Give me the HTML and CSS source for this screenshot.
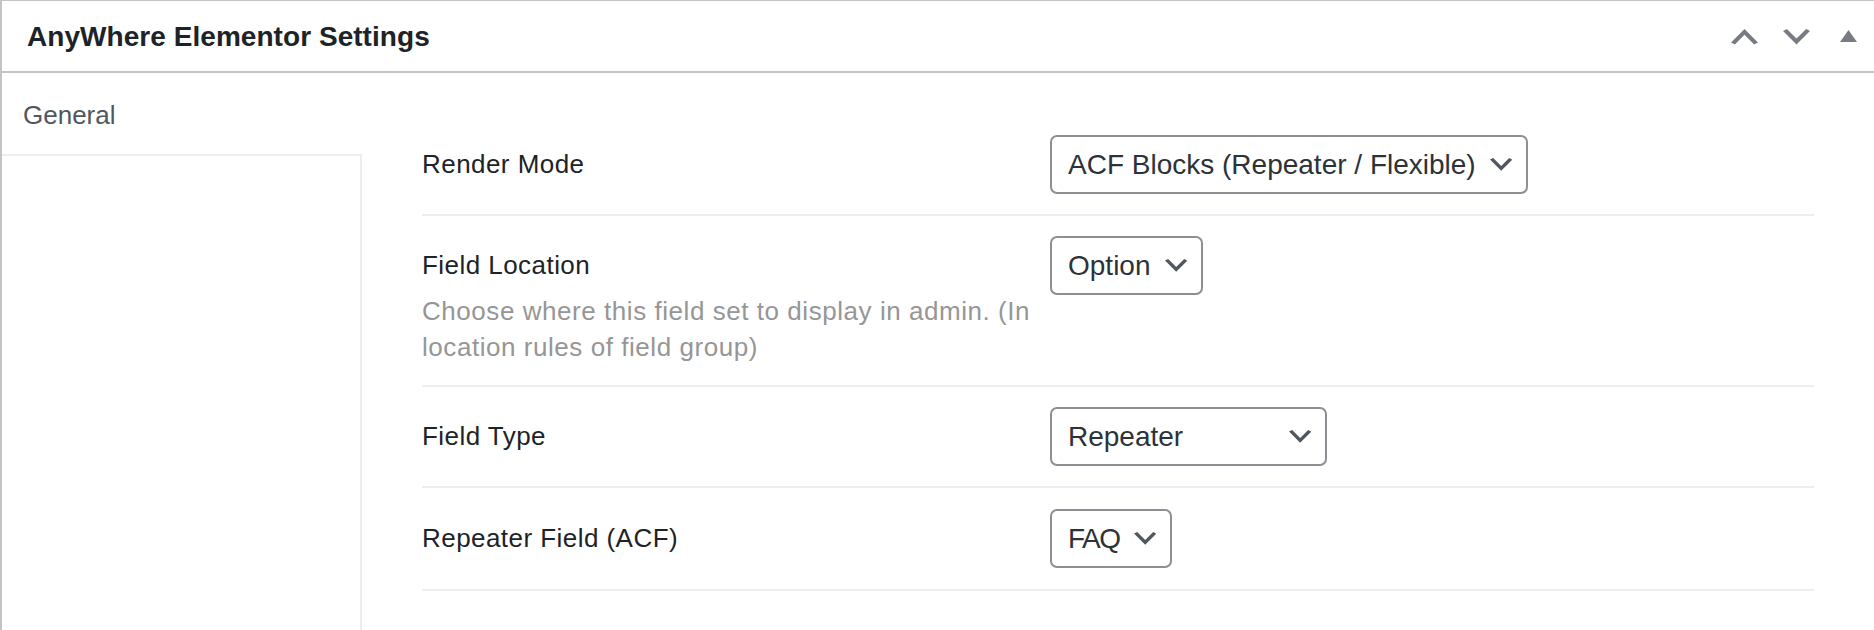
FILE: index.html
```html
<!DOCTYPE html>
<html lang="en">
<head>
<meta charset="utf-8">
<title>AnyWhere Elementor Settings</title>
<link rel="stylesheet" href="styles.css">
</head>
<body>
<div class="postbox">
  <div class="postbox-header">
    <h2 class="hndle">AnyWhere Elementor Settings</h2>
    <div class="handle-actions">
      <button class="handle-btn" type="button" aria-label="Move up">
        <svg class="handle-icon" width="27" height="15.4" viewBox="3 6 14 8"><path d="M15 14l-5-5-5 5-2-1 7-7 7 7z"/></svg>
      </button>
      <button class="handle-btn" type="button" aria-label="Move down">
        <svg class="handle-icon" width="27" height="15.4" viewBox="3 6 14 8"><path d="M5 6l5 5 5-5 2 1-7 7-7-7z"/></svg>
      </button>
      <button class="handle-btn" type="button" aria-label="Toggle panel">
        <svg class="handle-icon handle-icon--toggle" width="17" height="12" viewBox="0 0 17 12"><path d="M8.5 0L17 12H0z"/></svg>
      </button>
    </div>
  </div>
  <div class="inside">
    <div class="tabs">
      <div class="tab tab--active">General</div>
      <div class="tab-rest"></div>
    </div>
    <div class="fields">
      <div class="field">
        <div class="field-labels">
          <div class="field-label">Render Mode</div>
        </div>
        <div class="field-input">
          <div class="select">
            <span class="select-value">ACF Blocks (Repeater / Flexible)</span>
            <svg class="select-arrow" width="22.4" height="12.8" viewBox="3 6 14 8"><path d="M5 6l5 5 5-5 2 1-7 7-7-7 2-1z"/></svg>
          </div>
        </div>
      </div>
      <div class="field">
        <div class="field-labels">
          <div class="field-label">Field Location</div>
          <p class="field-desc">Choose where this field set to display in admin. (In location rules of field group)</p>
        </div>
        <div class="field-input">
          <div class="select">
            <span class="select-value">Option</span>
            <svg class="select-arrow" width="22.4" height="12.8" viewBox="3 6 14 8"><path d="M5 6l5 5 5-5 2 1-7 7-7-7 2-1z"/></svg>
          </div>
        </div>
      </div>
      <div class="field">
        <div class="field-labels">
          <div class="field-label">Field Type</div>
        </div>
        <div class="field-input">
          <div class="select select--wide">
            <span class="select-value">Repeater</span>
            <svg class="select-arrow" width="22.4" height="12.8" viewBox="3 6 14 8"><path d="M5 6l5 5 5-5 2 1-7 7-7-7 2-1z"/></svg>
          </div>
        </div>
      </div>
      <div class="field">
        <div class="field-labels">
          <div class="field-label">Repeater Field (ACF)</div>
        </div>
        <div class="field-input">
          <div class="select">
            <span class="select-value select-value--tight">FAQ</span>
            <svg class="select-arrow" width="22.4" height="12.8" viewBox="3 6 14 8"><path d="M5 6l5 5 5-5 2 1-7 7-7-7 2-1z"/></svg>
          </div>
        </div>
      </div>
    </div>
  </div>
</div>
</body>
</html>
```

FILE: styles.css
```css
* {
  box-sizing: border-box;
}

html,
body {
  margin: 0;
  padding: 0;
  background: #ffffff;
}

body {
  font-family: "Liberation Sans", Arial, sans-serif;
  color: #1d2327;
}

.postbox {
  min-height: 100vh;
  display: flex;
  flex-direction: column;
  border-top: 1px solid #c3c4c7;
  border-left: 2px solid #c3c4c7;
  background: #ffffff;
}

.postbox-header {
  display: flex;
  align-items: center;
  justify-content: space-between;
  height: 72px;
  padding-left: 25px;
  padding-top: 2px;
  border-bottom: 2px solid #c3c4c7;
}

.hndle {
  margin: 0;
  font-size: 28px;
  font-weight: 700;
  letter-spacing: 0.05px;
  color: #1d2327;
}

.handle-actions {
  display: flex;
  align-self: stretch;
}

.handle-btn {
  width: 52px;
  display: flex;
  align-items: center;
  justify-content: center;
  background: none;
  border: 0;
  padding: 0;
  margin: 0;
  cursor: pointer;
}

.handle-icon {
  fill: #787c82;
  display: block;
}

.handle-icon--toggle {
  margin-top: -3px;
}

.inside {
  flex: 1;
  display: flex;
}

.tabs {
  width: 360px;
  flex: none;
  display: flex;
  flex-direction: column;
}

.tab {
  padding: 24px 21px 21px;
  font-size: 26px;
  line-height: 36px;
  color: #50575e;
  background: #ffffff;
}

.tab-rest {
  flex: 1;
  border-top: 2px solid #eeeeee;
  border-right: 2px solid #eeeeee;
}

.fields {
  flex: 1;
  padding: 42px 60px 0;
}

.field {
  display: grid;
  grid-template-columns: 628px 1fr;
  padding: 20px 0;
  border-bottom: 2px solid #eeeeee;
}

.field:last-child {
  padding: 21px 0;
}

.field-label {
  font-size: 26px;
  line-height: 59px;
  letter-spacing: 0.45px;
  color: #1d2327;
}

.field-desc {
  margin: -2px 0 0;
  font-size: 26px;
  line-height: 36px;
  letter-spacing: 0.55px;
  color: #969696;
}

.field-input {
  display: flex;
  align-items: flex-start;
}

.select {
  display: inline-flex;
  align-items: center;
  gap: 14px;
  height: 59px;
  padding: 0 14px 0 16px;
  border: 2px solid #8c8f94;
  border-radius: 7px;
  background: #ffffff;
  font-size: 28px;
  color: #2c3338;
  white-space: nowrap;
}

.select--wide {
  width: 277px;
  justify-content: space-between;
}

.select-value--tight {
  letter-spacing: -1.5px;
}

.select-arrow {
  fill: #50575e;
  display: block;
  flex: none;
}
```
